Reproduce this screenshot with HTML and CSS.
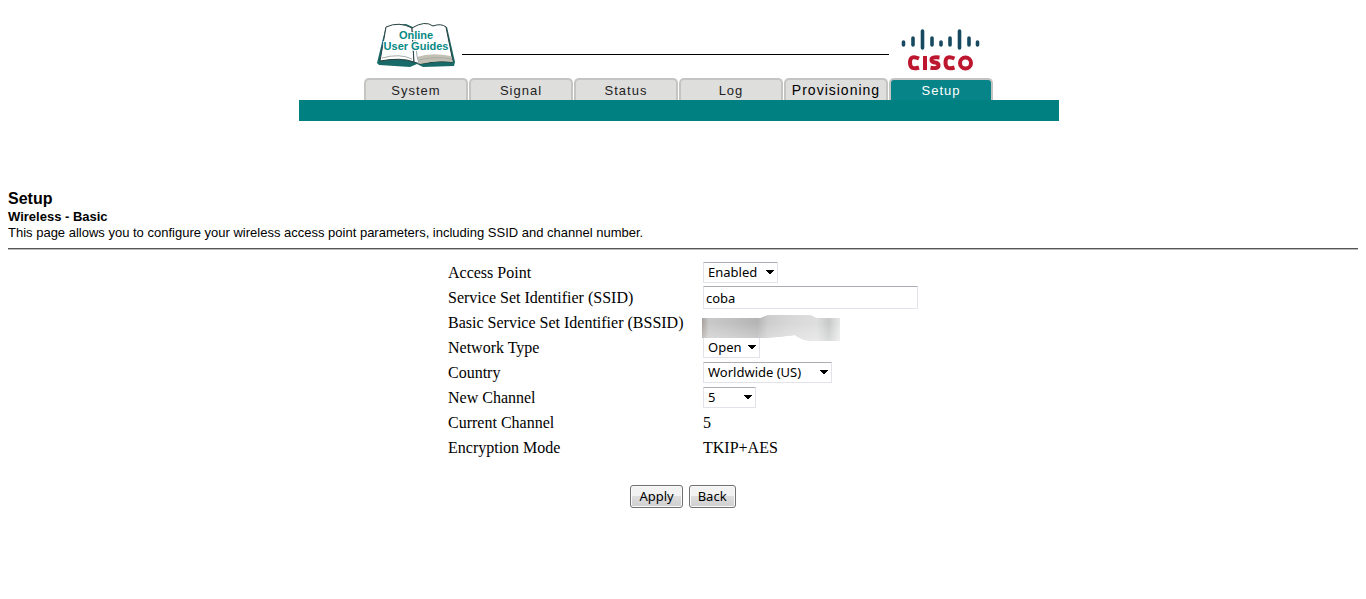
FILE: index.html
```html
<!DOCTYPE html>
<html lang="en">
<head>
<meta charset="utf-8">
<title>Setup: Wireless - Basic</title>
<link rel="stylesheet" href="styles.css">
</head>
<body>
<header class="masthead">
  <div class="brand">
    <a class="guides" href="#" aria-label="Online User Guides">
      <svg width="80" height="48" viewBox="0 0 80 48">
        <path d="M0 41 L8 8 L9 5 L18 3 L29 2 L38 6 L47 2 L54 4 L61 3 L70 5 L78 40 L77 44 L46 45 L40 42 L33 45 L2 43Z" fill="#176a67"/>
        <path d="M9 5 Q22-1 35 6 L37 40 Q24 35 3 39Z" fill="#fff" stroke="#28403f"/>
        <path d="M35 6 Q48-2 56 4 Q64 1 69 5 L76 40 Q60 38 43 42 L37 40Z" fill="#fff" stroke="#28403f"/>
        <path d="M40 35 Q54 30 74 34 L76 40 Q59 38 43 42Z" fill="#c2c0b2"/>
        <path d="M5 36 Q23 31 35 37 M42 38 Q57 34 75 37" fill="none" stroke="#a5aca8"/>
        <path d="M37 9 L40 34 L42 42" fill="none" stroke="#9eb0ad"/>
        <g class="guides-text"><text x="39" y="17">Online</text><text x="39" y="28">User Guides</text></g>
      </svg>
    </a>
    <span class="rule"></span>
    <svg class="cisco" width="80" height="44" viewBox="0 0 80 44" role="img" aria-label="Cisco">
      <path d="M2.500 14v3M12 10v7M21.500 3v17M31 10v7M40 14v3M49 10v7M58.500 3v17M68 10v7M76.500 14v3" stroke="#174a61" stroke-width="3.600" stroke-linecap="round"/>
      <g fill="none" stroke="#bd1730" stroke-width="4">
        <path d="M18 30.500Q9 26.500 9 34.500T18 39.500M24 28v14M38.500 29.600Q30 28.500 30.500 32Q30.500 34 34 34.500Q38 35 37.500 38Q36.500 41 29.500 39.700M53.500 30.500Q44.500 26.500 44.500 34.500T53.500 39.500"/>
        <circle cx="64.500" cy="35" r="5.500"/>
      </g>
    </svg>
  </div>
  <nav class="tabs">
    <a class="tab" href="#">System</a>
    <a class="tab" href="#">Signal</a>
    <a class="tab" href="#">Status</a>
    <a class="tab" href="#">Log</a>
    <a class="tab tab-wide" href="#">Provisioning</a>
    <a class="tab tab-active" href="#" aria-current="page">Setup</a>
  </nav>
  <div class="band"></div>
</header>
<main>
  <h1>Setup</h1>
  <h2>Wireless - Basic</h2>
  <p class="intro">This page allows you to configure your wireless access point parameters, including SSID and channel number.</p>
  <hr class="divider">
  <form>
    <table class="settings">
      <tr><td class="name"><label for="ap">Access Point</label></td><td><select id="ap" class="w-ap"><option>Enabled</option><option>Disabled</option></select></td></tr>
      <tr><td class="name"><label for="ssid">Service Set Identifier (SSID)</label></td><td><input id="ssid" type="text" value="coba"></td></tr>
      <tr><td class="name">Basic Service Set Identifier (BSSID)</td><td class="masked">
        <svg class="smudge" width="138" height="26" viewBox="0 0 138 26" aria-hidden="true">
          <defs>
            <linearGradient id="grey"><stop offset="0" stop-color="#a8a09c"/><stop offset=".05" stop-color="#c9c9c9"/><stop offset=".22" stop-color="#c0c0c0"/><stop offset=".4" stop-color="#b4b4b4"/><stop offset=".48" stop-color="#cdcdcd"/><stop offset=".65" stop-color="#d8d8d8"/><stop offset=".83" stop-color="#dedede"/><stop offset=".92" stop-color="#c7c9c9"/><stop offset="1" stop-color="#e8e8e8"/></linearGradient>
            <linearGradient id="fade" x2="0" y2="1"><stop offset=".3" stop-color="#fff" stop-opacity="0"/><stop offset="1" stop-color="#fff" stop-opacity=".35"/></linearGradient>
          </defs>
          <path id="stroke" d="M0 3H59Q64 0 70 0H106Q110 0 114 3H138V26H109Q99 25 93 20L75 22L60 23H0Z" fill="url(#grey)"/>
          <use href="#stroke"/>
          <path d="M0 3H59Q64 0 70 0H106Q110 0 114 3H138V26H109Q99 25 93 20L75 22L60 23H0Z" fill="url(#fade)"/>
        </svg></td></tr>
      <tr><td class="name"><label for="net">Network Type</label></td><td><select id="net" class="w-net"><option>Open</option><option>Closed</option></select></td></tr>
      <tr><td class="name"><label for="country">Country</label></td><td><select id="country" class="w-country"><option>Worldwide (US)</option></select></td></tr>
      <tr><td class="name"><label for="channel">New Channel</label></td><td><select id="channel" class="w-channel"><option>5</option></select></td></tr>
      <tr><td class="name">Current Channel</td><td>5</td></tr>
      <tr><td class="name">Encryption Mode</td><td>TKIP+AES</td></tr>
    </table>
    <div class="actions">
      <button type="submit">Apply</button>
      <button type="button">Back</button>
    </div>
  </form>
</main>
</body>
</html>
```
FILE: styles.css
```css
* { box-sizing: border-box; }
body {
  margin: 0;
  padding: 22px 8px;
  background: #fff;
  color: #000;
  font: 16px/20px "Liberation Serif", "Times New Roman", serif;
}
.masthead {
  max-width: 768px;
  margin: 0 auto;
  padding-right: 8px;
}
.brand {
  display: flex;
  align-items: flex-start;
  height: 56px;
  padding: 0 78px;
}
.guides { display: block; height: 48px; margin-right: 5px; }
.guides-text {
  fill: #078985;
  stroke: #fff;
  stroke-width: 2px;
  paint-order: stroke;
  font: bold 11px "Liberation Sans", Arial, sans-serif;
  text-anchor: middle;
}
.rule { flex: 1; height: 1px; margin: 32px 12px 0 0; background: #000; }
.cisco { margin-top: 6px; }
.tabs {
  display: flex;
  gap: 1px;
  padding: 0 66px 0 65px;
}
.tab {
  flex: 1 1 0;
  min-width: 0;
  height: 22px;
  border: 2px solid #c4c4c2;
  border-bottom: 0;
  border-radius: 5px 5px 0 0;
  background: #dededc;
  color: #222;
  font: 13px/21px "Liberation Sans", Arial, sans-serif;
  letter-spacing: 1px;
  text-align: center;
  text-decoration: none;
}
.tab-wide { color: #000; font-size: 14px; }
.tab-active { background: #078487; color: #fff; }
.band { height: 21px; background: #008080; }
h1, h2, .intro { margin: 0; font-family: "Liberation Sans", Arial, sans-serif; }
h1 { margin-top: 68px; font-size: 16px; line-height: 20px; }
h2 { font-size: 13px; line-height: 16px; }
.intro { font-size: 13px; line-height: 16px; }
.divider { height: 2px; margin: 7px 0 10px; border: 0; border-top: 1px solid #555; background: #bbb; }
.settings { width: 470px; margin: 0 auto; border-collapse: collapse; }
.settings td { height: 25px; padding: 0; vertical-align: middle; }
.settings .name { width: 255px; }
input, select, button {
  display: block;
  margin: 0;
  color: #000;
  font: 13px/17px "Noto Sans", "Open Sans", sans-serif;
}
input, select {
  border: 1px solid #e2e3ea;
  border-top-color: #abadb3;
  border-radius: 1px;
  background: #fff;
}
input { width: 215px; height: 23px; padding: 1px 2px; }
select {
  appearance: none;
  height: 21px;
  padding: 0 4px;
  background-image: linear-gradient(to bottom left, #000 50%, transparent 50%), linear-gradient(to bottom right, #000 50%, transparent 50%);
  background-repeat: no-repeat;
  background-size: 4px 5px;
  background-position: right 7px center, right 3px center;
}
.w-ap { width: 75px; }
.w-net { width: 57px; }
.w-country { width: 129px; }
.w-channel { width: 53px; }
.settings .masked { position: relative; }
.smudge { position: absolute; top: 5px; left: -1px; }
.actions { display: flex; justify-content: center; gap: 6px; margin-top: 25px; }
button {
  height: 23px;
  padding: 0 8px;
  border: 1px solid #707070;
  border-radius: 3px;
  background: linear-gradient(#f2f2f2 50%, #dddddd 50%, #cfcfcf);
  box-shadow: inset 0 0 0 1px #fafafa;
}
```
